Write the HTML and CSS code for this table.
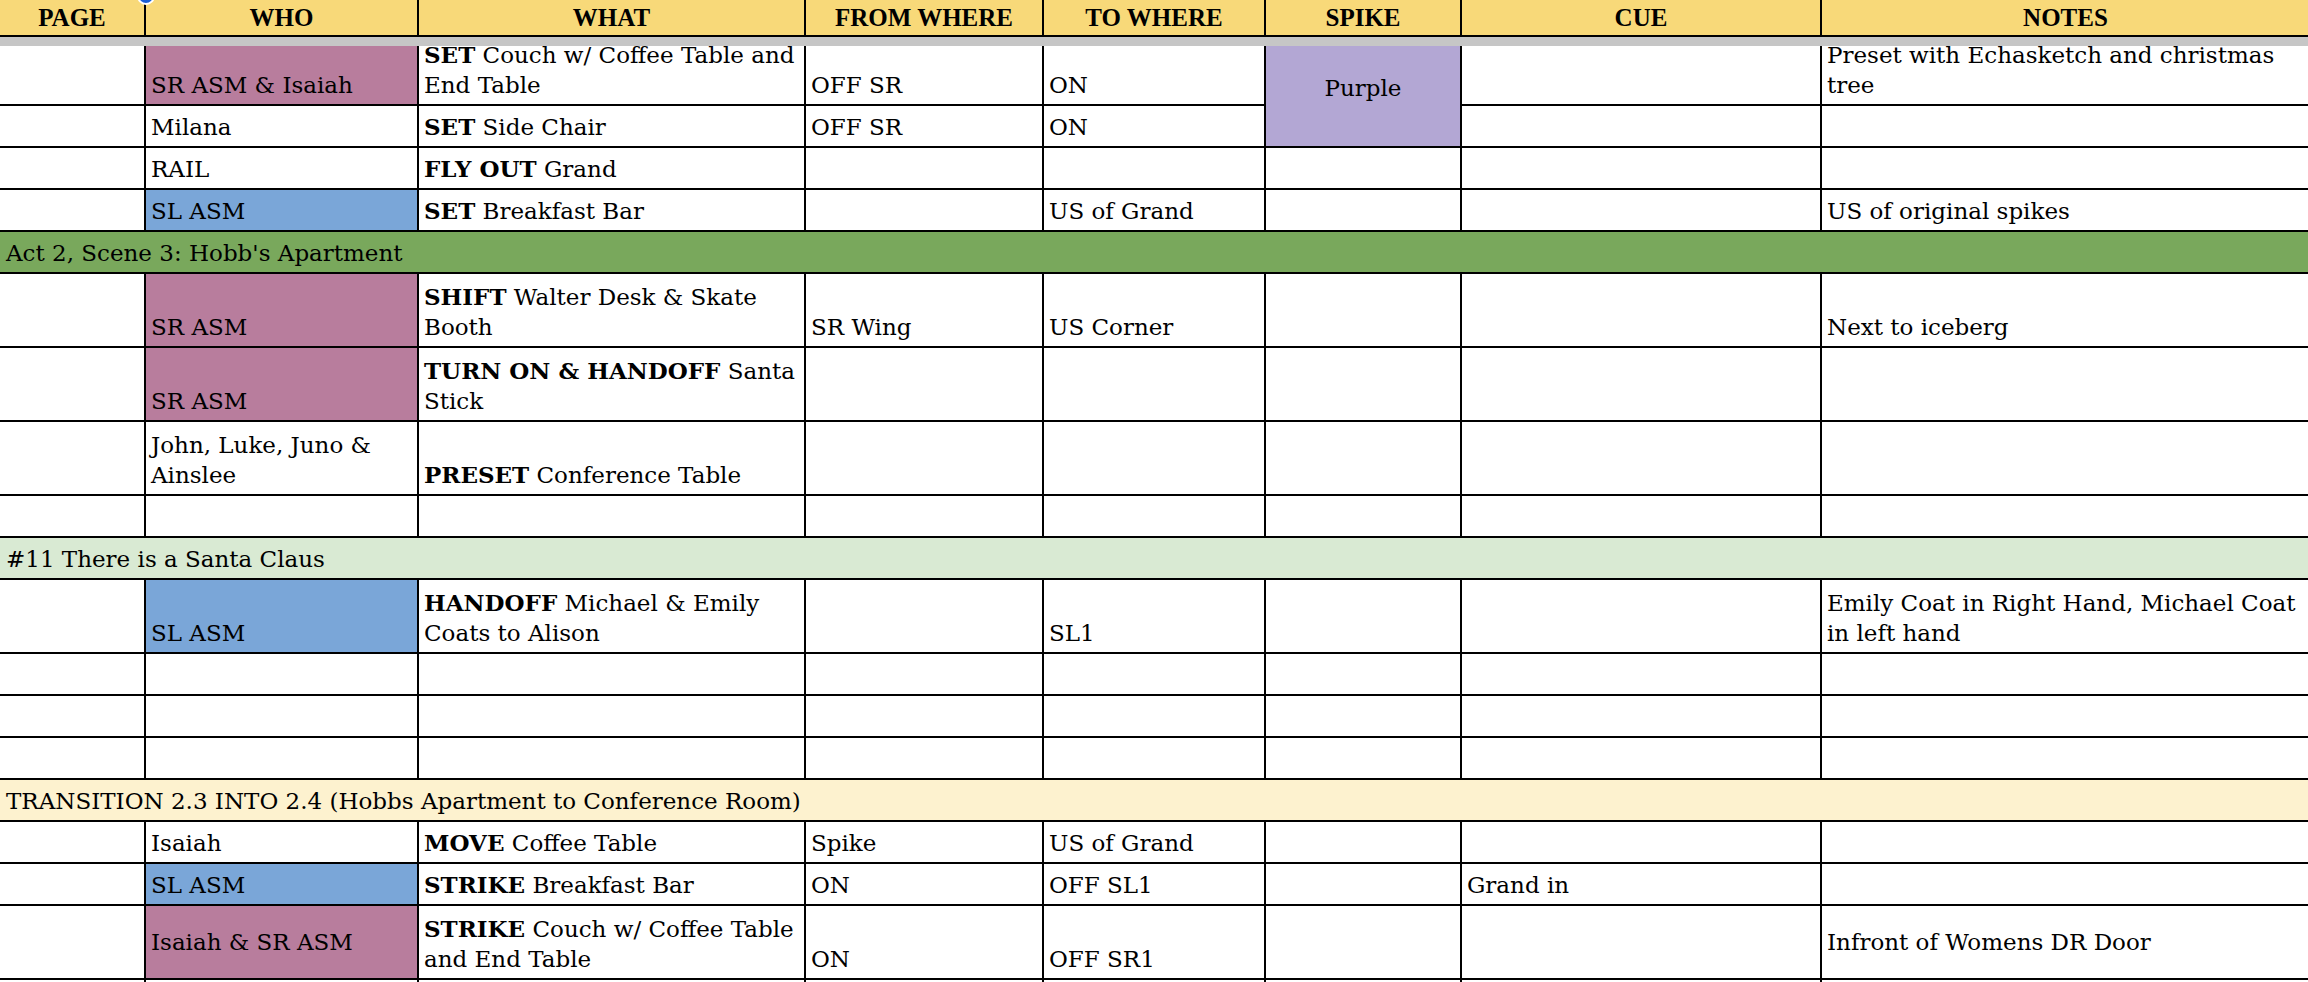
FILE: index.html
```html
<!DOCTYPE html>
<html>
<head>
<meta charset="utf-8">
<title>Shift Track</title>
<link rel="stylesheet" href="styles.css">
</head>
<body>
<div class="sheet">
  <div class="handle"></div>
  <div class="head">
    <div class="hc">PAGE</div>
    <div class="hc">WHO</div>
    <div class="hc">WHAT</div>
    <div class="hc">FROM WHERE</div>
    <div class="hc">TO WHERE</div>
    <div class="hc">SPIKE</div>
    <div class="hc">CUE</div>
    <div class="hc">NOTES</div>
  </div>
  <div class="freeze"></div>
  <div class="viewport">
    <div class="grid">
      <!-- r1 -->
      <div class="c"></div>
      <div class="c pink">SR ASM &amp; Isaiah</div>
      <div class="c"><span><b>SET</b> Couch w/ Coffee Table and<br>End Table</span></div>
      <div class="c">OFF SR</div>
      <div class="c">ON</div>
      <div class="c purple">Purple</div>
      <div class="c"></div>
      <div class="c"><span>Preset with Echasketch and christmas<br>tree</span></div>
      <!-- r2 -->
      <div class="c"></div>
      <div class="c">Milana</div>
      <div class="c"><span><b>SET</b> Side Chair</span></div>
      <div class="c">OFF SR</div>
      <div class="c">ON</div>
      <div class="c"></div>
      <div class="c"></div>
      <!-- r3 -->
      <div class="c"></div>
      <div class="c">RAIL</div>
      <div class="c"><span><b>FLY OUT</b> Grand</span></div>
      <div class="c"></div>
      <div class="c"></div>
      <div class="c"></div>
      <div class="c"></div>
      <div class="c"></div>
      <!-- r4 -->
      <div class="c"></div>
      <div class="c blue">SL ASM</div>
      <div class="c"><span><b>SET</b> Breakfast Bar</span></div>
      <div class="c"></div>
      <div class="c">US of Grand</div>
      <div class="c"></div>
      <div class="c"></div>
      <div class="c">US of original spikes</div>
      <!-- section -->
      <div class="c sec green">Act 2, Scene 3: Hobb's Apartment</div>
      <!-- r5 -->
      <div class="c"></div>
      <div class="c pink">SR ASM</div>
      <div class="c"><span><b>SHIFT</b> Walter Desk &amp; Skate<br>Booth</span></div>
      <div class="c">SR Wing</div>
      <div class="c">US Corner</div>
      <div class="c"></div>
      <div class="c"></div>
      <div class="c">Next to iceberg</div>
      <!-- r6 -->
      <div class="c"></div>
      <div class="c pink">SR ASM</div>
      <div class="c"><span><b>TURN ON &amp; HANDOFF</b> Santa<br>Stick</span></div>
      <div class="c"></div>
      <div class="c"></div>
      <div class="c"></div>
      <div class="c"></div>
      <div class="c"></div>
      <!-- r7 -->
      <div class="c"></div>
      <div class="c"><span>John, Luke, Juno &amp;<br>Ainslee</span></div>
      <div class="c"><span><b>PRESET</b> Conference Table</span></div>
      <div class="c"></div>
      <div class="c"></div>
      <div class="c"></div>
      <div class="c"></div>
      <div class="c"></div>
      <!-- r8 -->
      <div class="c"></div>
      <div class="c"></div>
      <div class="c"></div>
      <div class="c"></div>
      <div class="c"></div>
      <div class="c"></div>
      <div class="c"></div>
      <div class="c"></div>
      <!-- section -->
      <div class="c sec mint">#11 There is a Santa Claus</div>
      <!-- r9 -->
      <div class="c"></div>
      <div class="c blue">SL ASM</div>
      <div class="c"><span><b>HANDOFF</b> Michael &amp; Emily<br>Coats to Alison</span></div>
      <div class="c"></div>
      <div class="c">SL1</div>
      <div class="c"></div>
      <div class="c"></div>
      <div class="c"><span>Emily Coat in Right Hand, Michael Coat<br>in left hand</span></div>
      <!-- r10 -->
      <div class="c"></div><div class="c"></div><div class="c"></div><div class="c"></div>
      <div class="c"></div><div class="c"></div><div class="c"></div><div class="c"></div>
      <!-- r11 -->
      <div class="c"></div><div class="c"></div><div class="c"></div><div class="c"></div>
      <div class="c"></div><div class="c"></div><div class="c"></div><div class="c"></div>
      <!-- r12 -->
      <div class="c"></div><div class="c"></div><div class="c"></div><div class="c"></div>
      <div class="c"></div><div class="c"></div><div class="c"></div><div class="c"></div>
      <!-- section -->
      <div class="c sec cream">TRANSITION 2.3 INTO 2.4 (Hobbs Apartment to Conference Room)</div>
      <!-- r13 -->
      <div class="c"></div>
      <div class="c">Isaiah</div>
      <div class="c"><span><b>MOVE</b> Coffee Table</span></div>
      <div class="c">Spike</div>
      <div class="c">US of Grand</div>
      <div class="c"></div>
      <div class="c"></div>
      <div class="c"></div>
      <!-- r14 -->
      <div class="c"></div>
      <div class="c blue">SL ASM</div>
      <div class="c"><span><b>STRIKE</b> Breakfast Bar</span></div>
      <div class="c">ON</div>
      <div class="c">OFF SL1</div>
      <div class="c"></div>
      <div class="c">Grand in</div>
      <div class="c"></div>
      <!-- r15 -->
      <div class="c"></div>
      <div class="c pink mid">Isaiah &amp; SR ASM</div>
      <div class="c"><span><b>STRIKE</b> Couch w/ Coffee Table<br>and End Table</span></div>
      <div class="c">ON</div>
      <div class="c">OFF SR1</div>
      <div class="c"></div>
      <div class="c"></div>
      <div class="c mid">Infront of Womens DR Door</div>
      <!-- r16 -->
      <div class="c"></div><div class="c"></div><div class="c"></div><div class="c"></div>
      <div class="c"></div><div class="c"></div><div class="c"></div><div class="c"></div>
    </div>
  </div>
</div>
</body>
</html>
```

FILE: styles.css
```css
html, body {
  margin: 0;
  padding: 0;
  background: #ffffff;
}

.sheet {
  position: relative;
  width: 2308px;
  height: 982px;
  overflow: hidden;
  display: flex;
  flex-direction: column;
  background: #ffffff;
}

.head,
.grid {
  display: grid;
  grid-template-columns: 146px 273px 387px 238px 222px 196px 360px 489px;
  width: 2311px;
  flex: none;
}

.head {
  height: 37px;
  box-sizing: border-box;
  background: #f8d979;
  border-bottom: 2px solid #000;
}

.hc {
  border-right: 2px solid #000;
  display: flex;
  align-items: center;
  justify-content: center;
  padding-top: 1px;
  font-family: "Liberation Serif", serif;
  font-weight: 700;
  font-size: 25px;
  line-height: 30px;
  color: #000;
  white-space: nowrap;
}

.freeze {
  height: 9px;
  flex: none;
  background: #c6c6c6;
}

.viewport {
  flex: 1;
  overflow: hidden;
}

.grid {
  margin-top: -15px;
  grid-template-rows: 75px 42px 42px 42px 42px 74px 74px 74px 42px 42px 74px 42px 42px 42px 42px 42px 42px 74px 42px 42px;
}

.c {
  box-sizing: border-box;
  min-width: 0;
  border-right: 2px solid #000;
  border-bottom: 2px solid #000;
  display: flex;
  flex-direction: column;
  justify-content: flex-end;
  padding: 0 5px 4px 5px;
  font-family: "DejaVu Serif", serif;
  font-size: 23px;
  line-height: 30px;
  color: #000;
  white-space: nowrap;
  overflow: hidden;
}

.c b {
  font-weight: 700;
}

.mid {
  justify-content: center;
  padding-bottom: 0;
}

.sec {
  grid-column: 1 / -1;
  border-right: 0;
  padding-left: 6px;
}

.pink { background: #b87d9d; }
.blue { background: #7aa6d8; }
.green { background: #79a85c; }
.mint { background: #d9ead3; }
.cream { background: #fdf2cf; }

.purple {
  grid-row: span 2;
  background: #b3a7d4;
  align-items: center;
  justify-content: center;
  padding: 0 0 2px 0;
}

.handle {
  position: absolute;
  left: 137px;
  top: -13px;
  width: 18px;
  height: 18px;
  box-sizing: border-box;
  border-radius: 50%;
  background: #1b5fd6;
  border: 2px solid #ffffff;
  z-index: 2;
}
```
